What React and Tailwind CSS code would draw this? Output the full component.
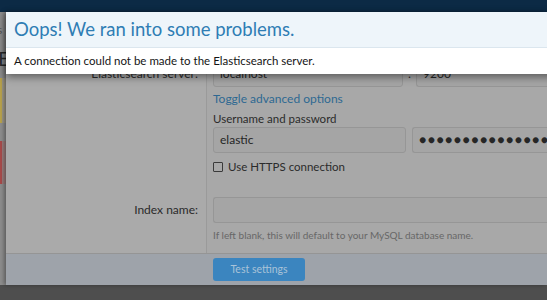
import React from 'react';

const FONT = { fontFamily: 'Lato, "Noto Sans", Arial, sans-serif' };

function Field({ value, className = '' }) {
  return (
    <div className={'h-[26px] overflow-hidden whitespace-nowrap rounded-[3px] border border-[#969696] bg-[#a5a5a5] px-[6px] flex items-center text-[12px] text-[#262626] ' + className}>
      {value}
    </div>
  );
}

export default function App() {
  return (
    <div className="relative w-[547px] h-[300px] overflow-hidden bg-[#4e4e4e]" style={FONT}>
      <div className="h-[12px] bg-[#0c2a45]" />

      <div className="flex">
        {/* bout de page visible a gauche */}
        <div className="w-[6px] shrink-0 h-[273px] bg-[#8d8d8d] overflow-hidden text-[#2a2a2a]">
          <div className="h-[12px]" />
          <div className="-ml-[3px] text-[12px] leading-[12px] text-[#555]">s</div>
          <div className="h-[14px]" />
          <div className="-ml-[2px] text-[20px] leading-[16px]">E</div>
          <div className="h-[12px]" />
          <div className="h-[45px] border-l-2 border-[#b8a24c] bg-[#9c9788]" />
          <div className="h-[18px]" />
          <div className="h-[43px] border-l-2 border-[#a84a4a] bg-[#9a7c7c]" />
        </div>

        <div className="flex-1 min-w-0 h-[273px] bg-[#a8a8a8] flex flex-col shadow-[-2px_0_4px_rgba(0,0,0,0.35)]">
          <div className="flex h-[241px]">
            <div className="w-[201px] shrink-0 border-r border-[#9a9a9a] bg-[#aaaaaa] text-right pr-[8px] pt-[49px] text-[12px] text-[#2b2b2b]">
              <div className="h-[26px] leading-[26px]">Elasticsearch server:</div>
              <div className="h-[110px]" />
              <div className="h-[26px] leading-[26px]">Index name:</div>
            </div>

            <div className="flex-1 min-w-0 pl-[6px] pt-[49px] text-[12px] text-[#2b2b2b]">
              <div className="flex items-center">
                <Field value="localhost" className="w-[190px] text-[#4a4a4a]" />
                <span className="w-[13px] text-center">:</span>
                <Field value="9200" className="flex-1 rounded-r-none border-r-0 text-[#4a4a4a]" />
              </div>
              <div className="mt-[4px] leading-[16px] text-[#2e6892]">Toggle advanced options</div>
              <div className="mt-[4px] leading-[16px] text-[11.5px]">Username and password</div>
              <div className="flex gap-[6px]">
                <Field value="elastic" className="w-[193px]" />
                <Field
                  value="●●●●●●●●●●●●●●●●●●●●"
                  className="flex-1 rounded-r-none border-r-0 tracking-[1.5px] text-[8px] text-[#111]"
                />
              </div>
              <label className="mt-[6px] flex items-center gap-[5px] leading-[16px] text-[11.5px]">
                <span className="w-[10px] h-[10px] border border-[#3a3a3a] rounded-[1px] bg-[#a8a8a8]" />
                Use HTTPS connection
              </label>
              <Field value="" className="mt-[22px] rounded-r-none border-r-0" />
              <div className="mt-[5px] leading-[14px] text-[10px] text-[#676767]">
                If left blank, this will default to your MySQL database name.
              </div>
            </div>
          </div>

          <div className="h-[32px] border-t border-[#959595] bg-[#9ea3aa] pl-[207px] pt-[4px]">
            <div className="w-[92px] h-[23px] rounded-[3px] bg-[#3b85bf] flex items-center justify-center text-[10.5px] text-[#a9c3d8]">
              Test settings
            </div>
          </div>
        </div>
      </div>

      {/* message d'erreur par-dessus le formulaire */}
      <div className="absolute left-[6px] top-[12px] w-[560px] bg-white shadow-[0_3px_8px_rgba(0,0,0,0.45)]">
        <div className="h-[36px] bg-[#eef5fa] border-b border-[#dbe6ee] pl-[8px] flex items-center text-[18.5px] text-[#2f7db4]">
          Oops! We ran into some problems.
        </div>
        <div className="h-[26px] pl-[8px] flex items-center text-[11.5px] text-[#141414]">
          A connection could not be made to the Elasticsearch server.
        </div>
      </div>
    </div>
  );
}
